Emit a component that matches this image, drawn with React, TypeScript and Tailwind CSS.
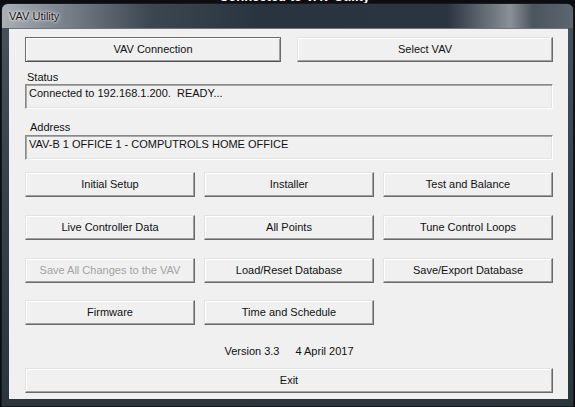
import React from "react";

const FONT = { fontFamily: '"Liberation Sans", Arial, sans-serif' };

function Btn({
  label,
  className = "",
  disabled = false,
}: {
  label: string;
  className?: string;
  disabled?: boolean;
}) {
  return (
    <div
      className={`h-[25px] flex items-center justify-center bg-[#f0f0f0] text-[11px] leading-none border border-t-[#e3e3e3] border-l-[#e3e3e3] border-r-[#696969] border-b-[#696969] shadow-[inset_-1px_-1px_0_#a0a0a0,inset_1px_1px_0_#ffffff] ${
        disabled ? "text-[#a3a3a3]" : "text-[#111111]"
      } ${className}`}
    >
      {label}
    </div>
  );
}

function TextBox({ value }: { value: string }) {
  return (
    <div className="h-[25px] w-[528px] pl-[3px] pt-[2px] bg-[#f0f0f0] text-[11px] leading-[13px] whitespace-pre text-[#111111] border border-t-[#8a8a8a] border-l-[#8a8a8a] border-r-[#ffffff] border-b-[#ffffff] shadow-[inset_1px_1px_0_#a8a8a8,inset_-1px_-1px_0_#e3e3e3]">
      {value}
    </div>
  );
}

export default function App() {
  return (
    <div className="w-[575px] h-[407px] bg-[#0b0d10] overflow-hidden" style={FONT}>
      <div className="h-[3px] overflow-hidden flex justify-center">
        <div className="-mt-[10px] ml-[14px] text-[13px] font-bold text-white leading-[13px]">
          Connected to VAV Utility
        </div>
      </div>
      <div className="ml-[1px] w-[573px] h-[404px] rounded-t-[7px] border border-[#141a20] bg-[linear-gradient(180deg,#4a535c_0%,#3a434c_40%,#2c343c_100%)] flex flex-col">
        <div className="h-[24px] rounded-t-[6px] bg-[linear-gradient(90deg,#a9afb5_0%,#7d858d_10%,#3d4751_26%,#2a3440_45%,#2b3541_78%,#6f777e_86%,#8a9197_89%,#4b555e_93%,#5d666e_100%)] flex items-center pl-[7px]">
          <span className="text-[11px] text-[#141414] [text-shadow:0_0_4px_#ffffff,0_0_2px_#ffffff]">
            VAV Utility
          </span>
        </div>
        <div className="ml-[7px] w-[559px] h-[371px] bg-[#f0f0f0] border-t border-[#6d747b] pl-[16px] pr-[15px] pt-[8px] flex flex-col">
          <div className="flex gap-[16px]">
            <div className="w-[256px] h-[25px] flex items-center justify-center text-[11px] text-[#111111] bg-[#f0f0f0] border border-[#6a6a6a] border-b-[#4e4e4e] shadow-[inset_1px_1px_0_#ffffff,inset_-1px_-1px_0_#a0a0a0]">
              VAV Connection
            </div>
            <Btn label="Select VAV" className="w-[256px]" />
          </div>
          <div className="mt-[9px] h-[13px] pl-[2px] text-[11px] leading-[13px] text-[#111111]">Status</div>
          <TextBox value="Connected to 192.168.1.200.  READY..." />
          <div className="mt-[12px] h-[13px] pl-[5px] text-[11px] leading-[13px] text-[#111111]">Address</div>
          <div className="mt-[1px]">
            <TextBox value="VAV-B 1 OFFICE 1 - COMPUTROLS HOME OFFICE" />
          </div>
          <div className="mt-[12px] flex gap-[9px]">
            <Btn label="Initial Setup" className="w-[170px]" />
            <Btn label="Installer" className="w-[170px]" />
            <Btn label="Test and Balance" className="w-[170px]" />
          </div>
          <div className="mt-[18px] flex gap-[9px]">
            <Btn label="Live Controller Data" className="w-[170px]" />
            <Btn label="All Points" className="w-[170px]" />
            <Btn label="Tune Control Loops" className="w-[170px]" />
          </div>
          <div className="mt-[18px] flex gap-[9px]">
            <Btn label="Save All Changes to the VAV" className="w-[170px]" disabled />
            <Btn label="Load/Reset Database" className="w-[170px]" />
            <Btn label="Save/Export Database" className="w-[170px]" />
          </div>
          <div className="mt-[17px] flex gap-[9px]">
            <Btn label="Firmware" className="w-[170px]" />
            <Btn label="Time and Schedule" className="w-[170px]" />
          </div>
          <div className="mt-[20px] h-[13px] flex justify-center gap-[16px] text-[11px] leading-[13px] text-[#111111]">
            <span>Version 3.3</span>
            <span>4 April 2017</span>
          </div>
          <div className="mt-[10px]">
            <Btn label="Exit" className="w-[528px] h-[24px]" />
          </div>
        </div>
      </div>
    </div>
  );
}
